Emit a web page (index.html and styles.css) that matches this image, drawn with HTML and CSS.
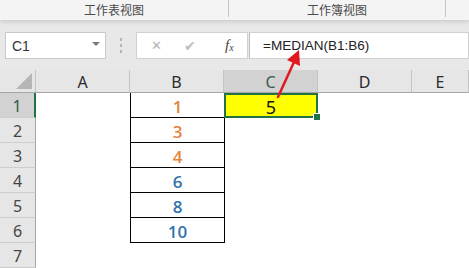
FILE: index.html
```html
<!DOCTYPE html>
<html lang="zh-CN">
<head>
    <meta charset="UTF-8">
    <title>MEDIAN</title>
    <link rel="stylesheet" href="styles.css">
</head>
<body>
<div class="window">
    <div class="view-tabs">
        <div class="tab tab-sheet">工作表视图</div>
        <div class="tab tab-book">工作簿视图</div>
        <div class="tab-rest"></div>
    </div>

    <div class="formula-bar">
        <div class="name-box">
            <span>C1</span>
            <span class="drop"></span>
        </div>
        <div class="grip"><i></i><i></i><i></i></div>
        <div class="fx-buttons">
            <span class="btn-x">&#x2715;</span>
            <span class="btn-ok">&#x2714;</span>
            <span class="btn-fx">f<sub>x</sub></span>
        </div>
        <div class="formula-input">=MEDIAN(B1:B6)</div>
    </div>

    <div class="sheet">
        <div class="corner"><svg width="18" height="18" viewBox="0 0 18 18"><polygon points="17,1 17,17 1,17" fill="#b5b5b5"/></svg></div>
        <div class="col-head">A</div>
        <div class="col-head">B</div>
        <div class="col-head selected">C</div>
        <div class="col-head">D</div>
        <div class="col-head">E</div>

        <div class="row-head selected">1</div>
        <div class="cell"></div>
        <div class="cell boxed first orange">1</div>
        <div class="cell active">5</div>
        <div class="cell"></div>
        <div class="cell"></div>

        <div class="row-head">2</div>
        <div class="cell"></div>
        <div class="cell boxed orange">3</div>
        <div class="cell"></div>
        <div class="cell"></div>
        <div class="cell"></div>

        <div class="row-head">3</div>
        <div class="cell"></div>
        <div class="cell boxed orange">4</div>
        <div class="cell"></div>
        <div class="cell"></div>
        <div class="cell"></div>

        <div class="row-head">4</div>
        <div class="cell"></div>
        <div class="cell boxed blue">6</div>
        <div class="cell"></div>
        <div class="cell"></div>
        <div class="cell"></div>

        <div class="row-head">5</div>
        <div class="cell"></div>
        <div class="cell boxed blue">8</div>
        <div class="cell"></div>
        <div class="cell"></div>
        <div class="cell"></div>

        <div class="row-head">6</div>
        <div class="cell"></div>
        <div class="cell boxed blue">10</div>
        <div class="cell"></div>
        <div class="cell"></div>
        <div class="cell"></div>

        <div class="row-head">7</div>
        <div class="cell"></div>
        <div class="cell"></div>
        <div class="cell"></div>
        <div class="cell"></div>
        <div class="cell"></div>
    </div>

    <!-- 注释用的红色箭头 -->
    <svg class="arrow" width="469" height="268" viewBox="0 0 469 268">
        <line x1="278" y1="97" x2="294" y2="62" stroke="#e0191f" stroke-width="2.5" stroke-linecap="round"/>
        <polygon points="299,50 300,66 287,60" fill="#e0191f"/>
    </svg>
</div>
</body>
</html>
```

FILE: styles.css
```css
* {
    box-sizing: border-box;
}
body {
    margin: 0;
    background: #fff;
    font-family: "Liberation Sans", Arial, "Noto Sans CJK SC", sans-serif;
    overflow: hidden;
}
.window {
    position: relative;
    width: 469px;
    height: 268px;
    overflow: hidden;
    background: #e6e6e6;
}
.view-tabs {
    display: flex;
    height: 20px;
    background: #f4f4f4;
    box-shadow: 0 2px 4px rgba(0, 0, 0, 0.12);
    position: relative;
}
.tab {
    display: flex;
    align-items: center;
    justify-content: center;
    font-family: "Noto Sans CJK SC", sans-serif;
    font-size: 12px;
    color: #4a4a4a;
    border-right: 1px solid #c4c4c4;
    height: 17px;
    padding-top: 2px;
}
.tab-sheet {
    width: 229px;
}
.tab-book {
    width: 217px;
}
.tab-rest {
    flex: 1;
}
.formula-bar {
    display: flex;
    height: 50px;
    padding: 12px 0 11px 5px;
    background: #e8e8e8;
}
.name-box {
    width: 101px;
    background: #fff;
    border: 1px solid #cacaca;
    display: flex;
    align-items: center;
    justify-content: space-between;
    padding: 0 5px 0 6px;
    font-size: 14px;
    color: #333;
}
.drop {
    width: 0;
    height: 0;
    border-left: 4px solid transparent;
    border-right: 4px solid transparent;
    border-top: 4px solid #7a7a7a;
    margin-top: -3px;
}
.grip {
    width: 30px;
    display: flex;
    flex-direction: column;
    align-items: center;
    justify-content: center;
    gap: 3px;
}
.grip i {
    width: 2px;
    height: 3px;
    background: #b5b5b5;
}
.fx-buttons {
    width: 112px;
    background: #fff;
    border: 1px solid #d0d0d0;
    display: flex;
    align-items: center;
    padding-left: 14px;
}
.btn-x {
    color: #b4b4b4;
    font-size: 13px;
    width: 33px;
}
.btn-ok {
    color: #bcbcbc;
    font-size: 14px;
    width: 41px;
}
.btn-fx {
    font-family: "Liberation Serif", serif;
    font-style: italic;
    font-size: 15px;
    color: #444;
}
.btn-fx sub {
    font-size: 10px;
    vertical-align: -1px;
}
.formula-input {
    flex: 1;
    background: #fff;
    border: 1px solid #d0d0d0;
    border-left: 1px solid #c0c0c0;
    margin-left: 1px;
    display: flex;
    align-items: center;
    padding-left: 13px;
    font-size: 13.5px;
    color: #222;
}
.sheet {
    display: grid;
    grid-template-columns: 36px 94px 94px 94px 94px 57px;
    grid-template-rows: 23px repeat(7, 25px);
    background: #fff;
}
.corner {
    background: #e6e6e6;
    border-right: 1px solid #c4c4c4;
    border-bottom: 1px solid #a6a6a6;
    display: flex;
    justify-content: flex-end;
    align-items: flex-end;
    padding: 0 2px 2px 0;
}
.col-head {
    background: #e6e6e6;
    border-right: 1px solid #c4c4c4;
    border-bottom: 1px solid #a6a6a6;
    display: flex;
    align-items: flex-end;
    justify-content: center;
    font-family: "Noto Sans", sans-serif;
    font-size: 16px;
    line-height: 20px;
    color: #2a2a2a;
}
.col-head.selected {
    background: #d2d2d2;
    color: #3c5a4a;
}
.row-head {
    background: #e6e6e6;
    border-right: 1px solid #a6a6a6;
    border-bottom: 1px solid #cdcdcd;
    display: flex;
    align-items: center;
    justify-content: center;
    font-family: "Noto Sans", sans-serif;
    font-size: 16px;
    color: #444;
    padding-top: 1px;
}
.row-head.selected {
    background: #d2d2d2;
    border-right: 2px solid #217346;
    color: #2f5a46;
}
.cell {
    display: flex;
    align-items: center;
    justify-content: center;
    font-family: "Noto Sans", sans-serif;
    font-size: 18px;
    padding-top: 2px;
}
.boxed {
    border-left: 1px solid #000;
    border-right: 1px solid #000;
    border-bottom: 1px solid #000;
    margin-right: -1px;
    font-family: "Open Sans", "Noto Sans", sans-serif;
    font-weight: 600;
    font-size: 17px;
}
.orange {
    color: #e4823e;
}
.blue {
    color: #3372ad;
}
.active {
    position: relative;
    background: #ffff00;
    border: 2px solid #217346;
    color: #111;
}
.active::after {
    content: "";
    position: absolute;
    right: -5px;
    bottom: -5px;
    width: 6px;
    height: 6px;
    background: #217346;
    border: 1px solid #fff;
}
.arrow {
    position: absolute;
    left: 0;
    top: 0;
    pointer-events: none;
}
```
